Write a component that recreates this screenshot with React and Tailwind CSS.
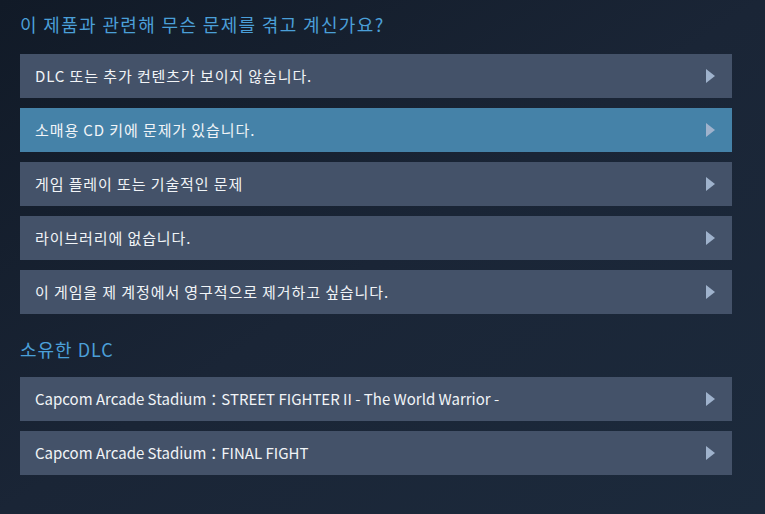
import React from 'react'

const issues = [
  { label: 'DLC 또는 추가 컨텐츠가 보이지 않습니다.' },
  { label: '소매용 CD 키에 문제가 있습니다.', active: true },
  { label: '게임 플레이 또는 기술적인 문제' },
  { label: '라이브러리에 없습니다.' },
  { label: '이 게임을 제 계정에서 영구적으로 제거하고 싶습니다.' },
]

const ownedDlc = [
  'Capcom Arcade Stadium：STREET FIGHTER II - The World Warrior -',
  'Capcom Arcade Stadium：FINAL FIGHT',
]

const Arrow = () => (
  <svg width="9" height="14" viewBox="0 0 9 14" className="shrink-0">
    <path d="M0 0 L9 7 L0 14 Z" fill="#9fb2cc" />
  </svg>
)

// hangul labels get a little extra tracking, latin titles don't
const HelpRow = ({ children, active, wide }) => (
  <div
    className={`flex items-center justify-between h-[44px] pl-[15px] pr-[17px] text-[15px] text-[#f1f4f7] cursor-pointer ${
      active ? 'bg-[#4582a8]' : 'bg-[#445269] hover:bg-[#4582a8]'
    }`}
  >
    <span className={wide ? 'tracking-[0.9px]' : ''}>{children}</span>
    <Arrow />
  </div>
)

export default function App() {
  return (
    <div
      className="w-[765px] h-[514px] overflow-hidden bg-gradient-to-br from-[#111a27] via-[#1a2536] to-[#1c2a3c] px-5 pt-[11px]"
      style={{ fontFamily: '"Noto Sans CJK KR", "Noto Sans", sans-serif' }}
    >
      <h2 className="text-[18px] leading-[26px] tracking-[1.35px] text-[#4b9fd8] font-normal">
        이 제품과 관련해 무슨 문제를 겪고 계신가요?
      </h2>
      <div className="mt-[17px] flex flex-col gap-[10px] w-[712px]">
        {issues.map((item) => (
          <HelpRow key={item.label} active={item.active} wide>
            {item.label}
          </HelpRow>
        ))}
      </div>

      <h2 className="mt-[22px] text-[18px] leading-[26px] tracking-[1px] text-[#4b9fd8] font-normal">
        소유한 DLC
      </h2>
      <div className="mt-[15px] flex flex-col gap-[10px] w-[712px]">
        {ownedDlc.map((name) => (
          <HelpRow key={name}>{name}</HelpRow>
        ))}
      </div>
    </div>
  )
}
